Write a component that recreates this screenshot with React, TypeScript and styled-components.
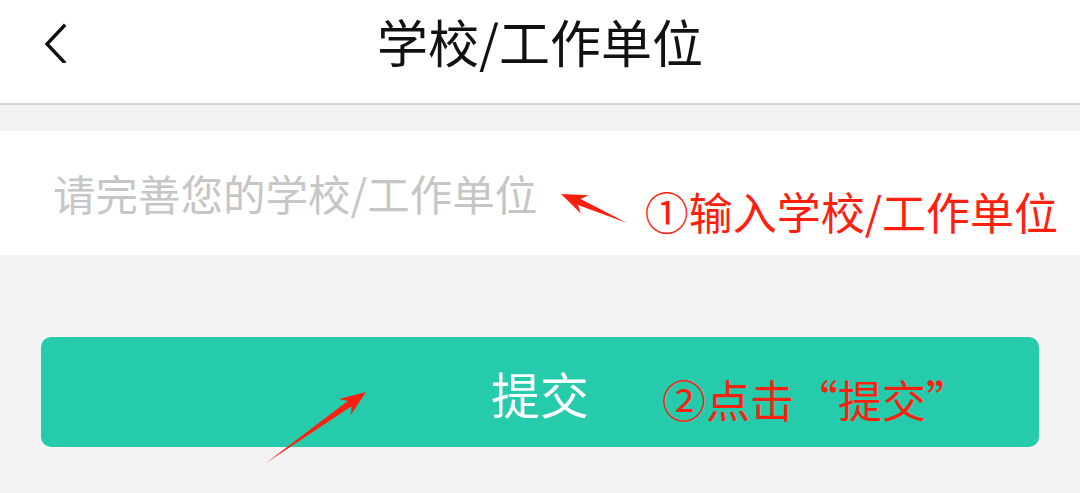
import React from "react";
import styled, { createGlobalStyle } from "styled-components";

const GlobalStyle = createGlobalStyle`
  html, body { margin: 0; padding: 0; }
  body {
    background: #f3f3f3;
    font-family: "Noto Sans CJK SC", "Noto Sans", sans-serif;
  }
`;

const Page = styled.div`
  position: relative;
  width: 1080px;
  height: 493px;
  overflow: hidden;
  background: #f3f3f3;
  display: flex;
  flex-direction: column;
`;

const Header = styled.header`
  position: relative;
  height: 103px;
  background: #ffffff;
  border-bottom: 2px solid #d2d2d2;
  display: flex;
  align-items: center;
  justify-content: center;
  flex-shrink: 0;
`;

const BackButton = styled.button`
  position: absolute;
  left: 38px;
  top: 20px;
  width: 34px;
  height: 46px;
  padding: 0;
  border: none;
  background: transparent;
  display: flex;
  align-items: center;
  justify-content: center;
`;

const Title = styled.h1`
  margin: 0;
  font-size: 51px;
  font-weight: 400;
  line-height: 1;
  color: #111111;
  transform: translateY(-10px);
`;

const InputRow = styled.div`
  margin-top: 26px;
  height: 124px;
  background: #ffffff;
  display: flex;
  align-items: center;
  justify-content: space-between;
  padding: 0 22px 0 53px;
  flex-shrink: 0;
`;

const Placeholder = styled.span`
  font-size: 42.5px;
  line-height: 1;
  color: #c6c6c6;
`;

const Annotation = styled.span<{ $size: number; $shift?: number }>`
  font-size: ${(p) => p.$size}px;
  line-height: 1;
  color: #ff1f0f;
  white-space: nowrap;
  transform: translateY(${(p) => p.$shift ?? 0}px);
`;

const SubmitButton = styled.button`
  position: relative;
  margin: 82px 0 0 41px;
  width: 998px;
  height: 110px;
  border: none;
  border-radius: 10px;
  background: #25cbab;
  color: #ffffff;
  font-family: "Noto Sans CJK SC", "Noto Sans", sans-serif;
  font-size: 49px;
  line-height: 1;
  display: flex;
  align-items: center;
  justify-content: center;
  flex-shrink: 0;
`;

const ButtonNote = styled.span`
  position: absolute;
  left: 621px;
  top: 40px;
  display: flex;
`;

const Overlay = styled.svg`
  position: absolute;
  left: 0;
  top: 0;
  pointer-events: none;
`;

function arrowPoints(tx: number, ty: number, hx: number, hy: number) {
  const dx = hx - tx;
  const dy = hy - ty;
  const len = Math.hypot(dx, dy);
  const ux = dx / len;
  const uy = dy / len;
  const nx = -uy;
  const ny = ux;
  const headLen = 26;
  const notch = 20;
  const shaftW = 3.2;
  const headW = 10;
  const bx = hx - ux * headLen;
  const by = hy - uy * headLen;
  const cx = hx - ux * notch;
  const cy = hy - uy * notch;
  const pts = [
    [tx, ty],
    [cx + nx * shaftW, cy + ny * shaftW],
    [bx + nx * headW, by + ny * headW],
    [hx, hy],
    [bx - nx * headW, by - ny * headW],
    [cx - nx * shaftW, cy - ny * shaftW],
  ];
  return pts.map((p) => `${p[0].toFixed(1)},${p[1].toFixed(1)}`).join(" ");
}

export default function App() {
  return (
    <>
      <GlobalStyle />
      <Page>
        <Header>
          <BackButton aria-label="返回">
            <svg width="24" height="40" viewBox="0 0 24 40">
              <polyline
                points="21,3 4,21 21,39"
                fill="none"
                stroke="#111"
                strokeWidth="3.4"
                strokeLinecap="square"
              />
            </svg>
          </BackButton>
          <Title>学校/工作单位</Title>
        </Header>
        <InputRow>
          <Placeholder>请完善您的学校/工作单位</Placeholder>
          <Annotation $size={44} $shift={18}>①输入学校/工作单位</Annotation>
        </InputRow>
        <SubmitButton>
          提交
          <ButtonNote>
            <Annotation $size={44}>②点击“提交”</Annotation>
          </ButtonNote>
        </SubmitButton>
        <Overlay width="1080" height="493" viewBox="0 0 1080 493">
          <polygon points={arrowPoints(627, 223, 561, 194)} fill="#ff1f0f" />
          <polygon points={arrowPoints(266, 463, 366, 392)} fill="#ff1f0f" />
        </Overlay>
      </Page>
    </>
  );
}
